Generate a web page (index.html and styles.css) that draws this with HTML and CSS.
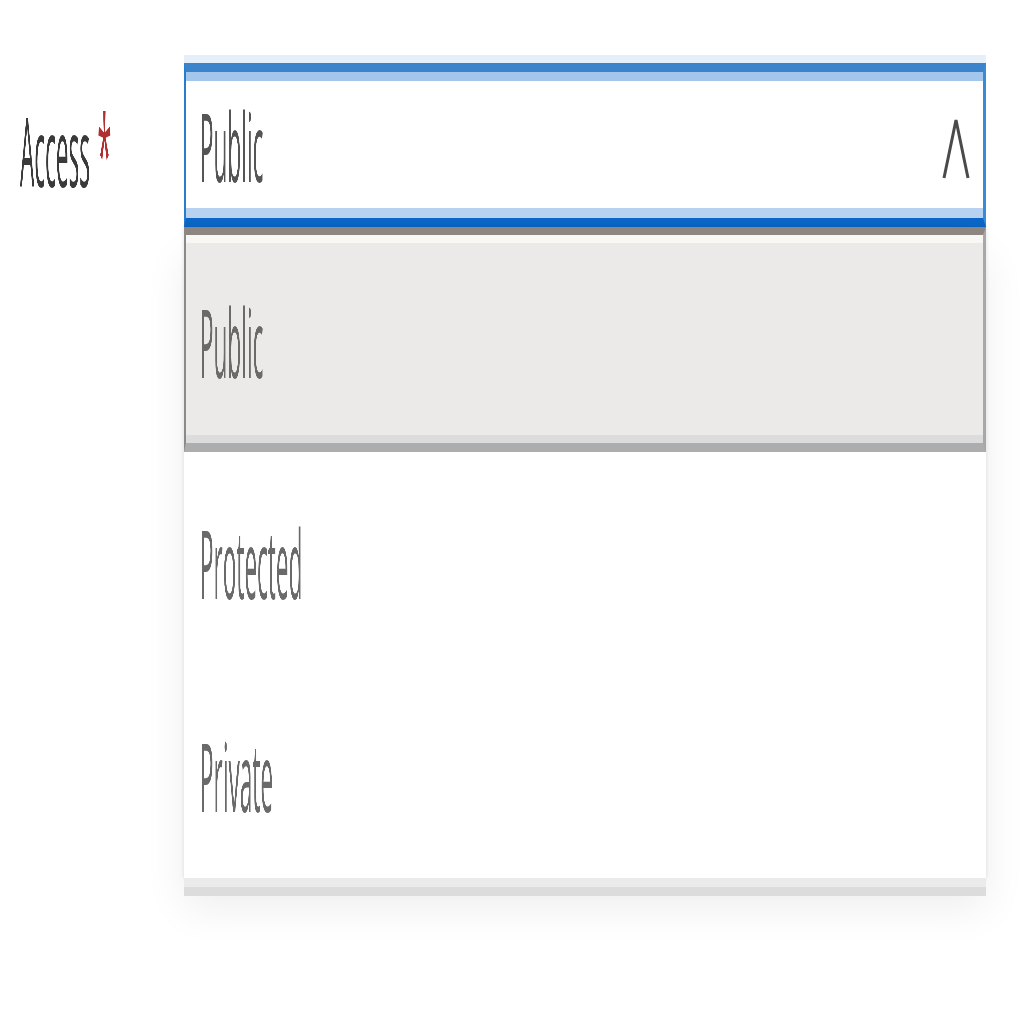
FILE: index.html
```html
<!DOCTYPE html>
<html>
<head>
<meta charset="utf-8">
<link rel="stylesheet" href="styles.css">
</head>
<body>
<div class="page">
  <div class="label"><span class="t lbl">Access <span class="req">*</span></span></div>
  <div class="field">
    <div class="input">
      <span class="t val">Public</span>
      <svg class="chev" width="30" height="62" viewBox="0 0 30 62"><polyline points="3,60 15,2 27,60" fill="none" stroke="#4a4a4a" stroke-width="3"/></svg>
    </div>
    <div class="list">
      <div class="opt sel"><span class="t">Public</span></div>
      <div class="opt"><span class="t">Protected</span></div>
      <div class="opt"><span class="t">Private</span></div>
    </div>
  </div>
</div>
</body>
</html>
```
FILE: styles.css
```css
html, body { margin: 0; padding: 0; background: #fff; }
body { font-family: "Open Sans", "Noto Sans", sans-serif; min-height: 1024px; }
.page { display: flex; padding: 63px 0 0 20px; }
.label { width: 164px; margin-top: 39px; }
.t {
  display: inline-block;
  font-size: 96px;
  font-weight: 400;
  line-height: 96px;
  height: 96px;
  transform: scaleX(0.235);
  transform-origin: 0 50%;
  will-change: transform;
  white-space: nowrap;
  color: #6a6a6a;
}
.lbl { color: #3a3a3a; }
.req { color: #b03030; font-size: 110px; vertical-align: top; position: relative; top: 2px; margin-left: 6px; }
.field { width: 802px; }
.input {
  display: flex;
  align-items: center;
  justify-content: space-between;
  padding: 25px 12px 25px 14px;
  border-top: 9px solid #3b84cc;
  border-bottom: 9px solid #0a66c6;
  border-left: 2px solid #2c7bc8;
  border-right: 3px solid #3b8ad6;
  box-shadow: inset 0 9px 0 #a3c6ec, inset 0 -10px 0 #b6d2f0, 0 -8px 0 #e5eff9;
  background: #fff;
}
.val { color: #555; }
.chev { display: block; margin-top: 8px; }
.list {
  background: #fff;
  box-shadow: 0 9px 0 #ebebeb, 0 18px 0 #dcdcdc, 0 30px 40px rgba(0,0,0,0.07), 0 0 4px rgba(0,0,0,0.12);
}
.opt { padding: 62px 14px 55px 16px; }
.opt.sel {
  padding: 58px 14px 54px 14px;
  border-top: 8px solid #8c8580;
  border-bottom: 9px solid #adadad;
  border-left: 2px solid #8a8a8a;
  border-right: 3px solid #a8a8a8;
  background: #ebeae8;
  box-shadow: inset 0 8px 0 #f8f7f4, inset 0 -8px 0 #dcdcdc;
}
```
